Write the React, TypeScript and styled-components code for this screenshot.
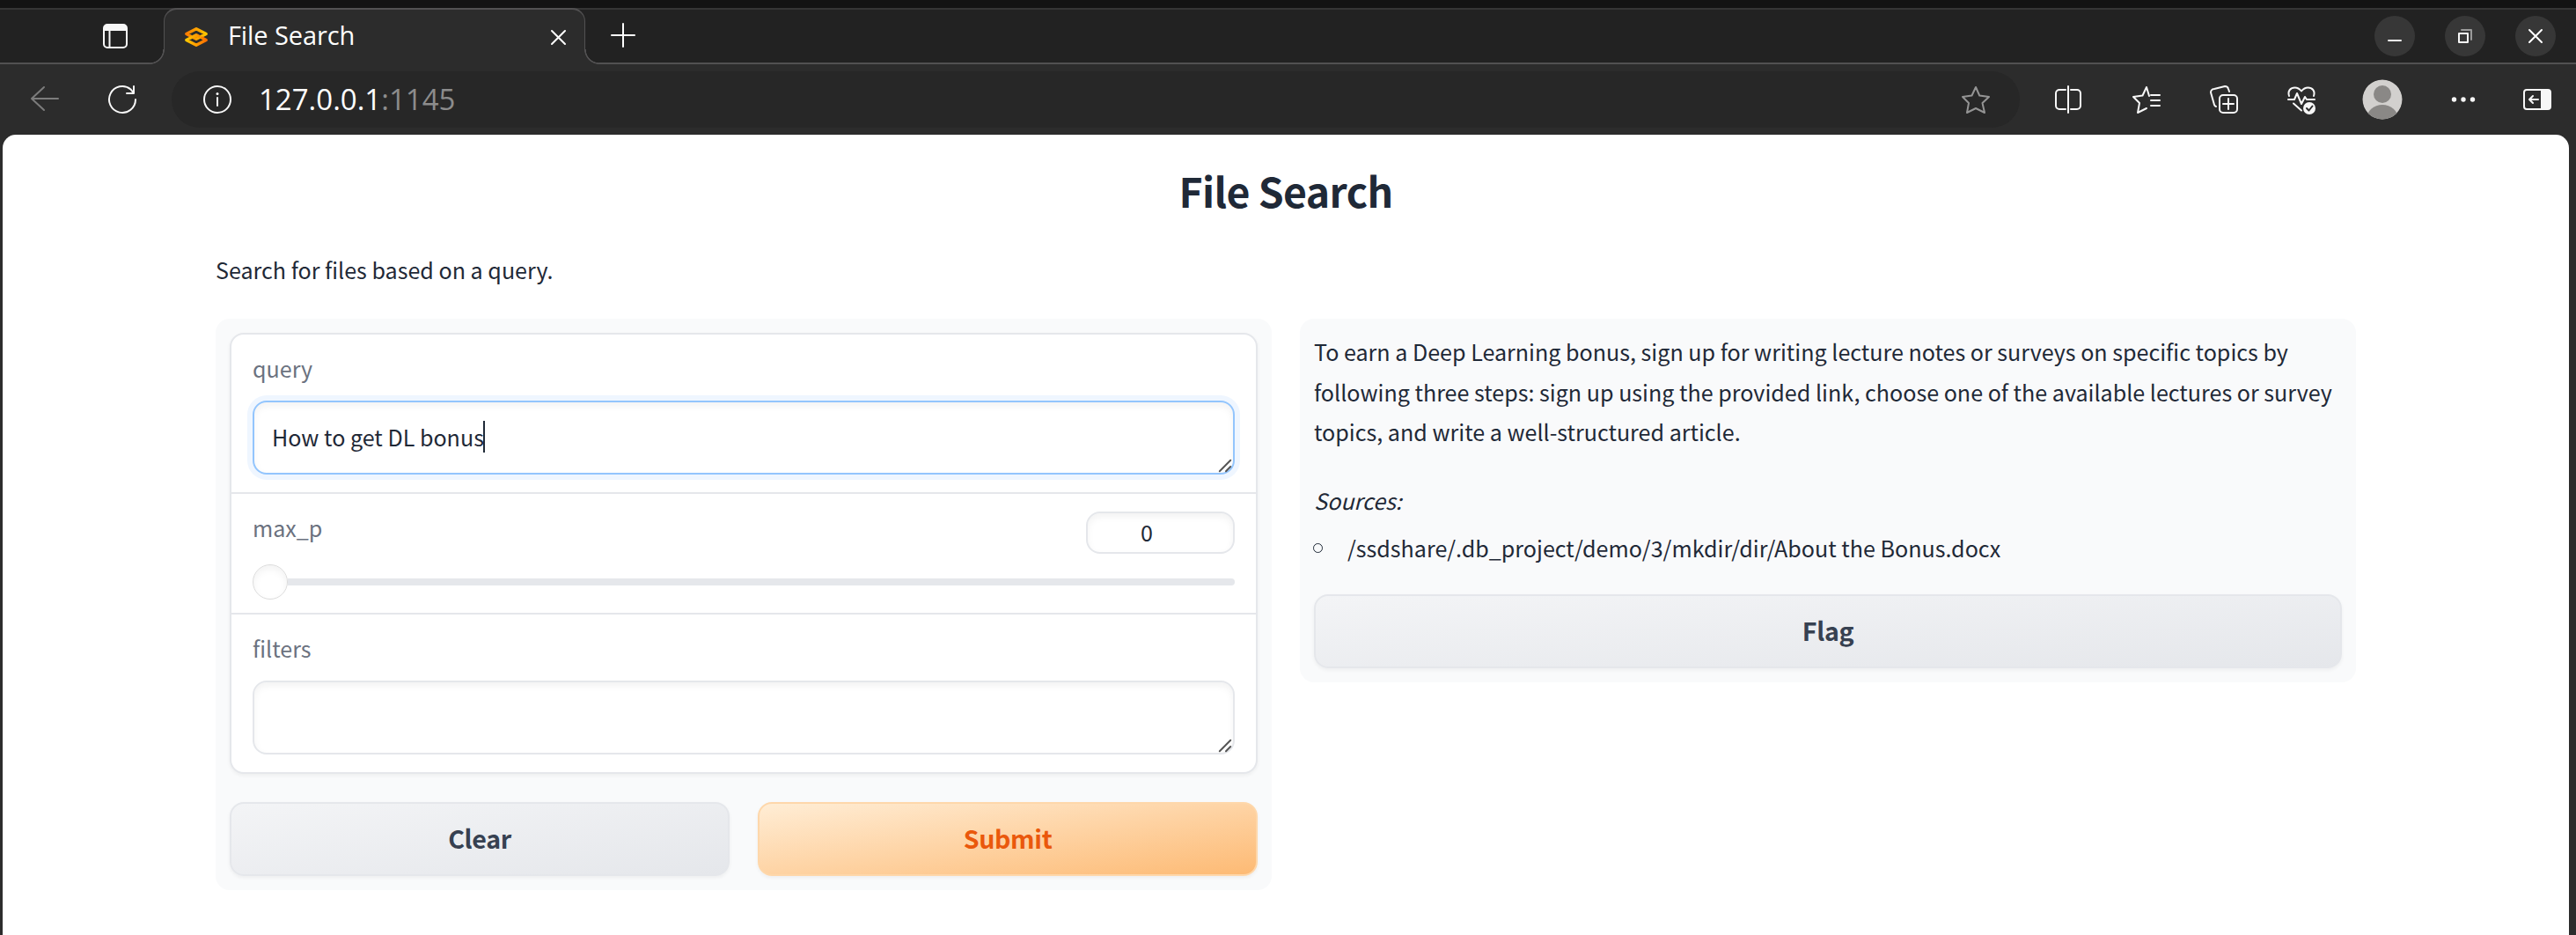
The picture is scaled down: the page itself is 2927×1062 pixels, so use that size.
import React from "react";
import styled, { createGlobalStyle, css } from "styled-components";

const uiFont = `"Noto Sans CJK SC", "Noto Sans", sans-serif`;
const chromeFont = `"Open Sans", "Noto Sans", sans-serif`;

const GlobalStyle = createGlobalStyle`
  *, *::before, *::after { box-sizing: border-box; }
  html, body { margin: 0; background: #2c2c2c; }
  h1, p, ul { margin: 0; padding: 0; }
`;

const Window = styled.div`
  width: 2927px;
  height: 1062px;
  overflow: hidden;
  display: flex;
  flex-direction: column;
  background: #2c2c2c;
  border-top: 9px solid #131313;
`;

/* ---------- Browser chrome ---------- */

const TabStrip = styled.div`
  flex: none;
  height: 64px;
  display: flex;
  align-items: stretch;
  background: #222;
  box-shadow: inset 0 2px #353535, inset 0 -2px #525152;
`;

const StripStart = styled.div`
  width: 186px;
  padding: 18px 0 0 117px;
`;

const Tab = styled.div`
  position: relative;
  width: 479px;
  display: flex;
  align-items: center;
  padding: 0 21px 0 23px;
  background: #2c2c2c;
  border: 1px solid #525152;
  border-top-width: 2px;
  border-bottom: 0;
  border-radius: 15px 15px 0 0;
  &::before,
  &::after {
    content: "";
    position: absolute;
    bottom: 0;
    width: 17px;
    height: 17px;
  }
  &::before {
    left: -17px;
    background: radial-gradient(circle at 0 0, #222 15px, #525152 15.6px, #525152 16.6px, #2c2c2c 17.2px);
  }
  &::after {
    right: -17px;
    background: radial-gradient(circle at 100% 0, #222 15px, #525152 15.6px, #525152 16.6px, #2c2c2c 17.2px);
  }
`;

const TabTitle = styled.span`
  flex: 1;
  margin: -5px 0 0 23px;
  color: #fff;
  font: 400 29px/40px ${chromeFont};
  letter-spacing: -0.1px;
`;

const NewTab = styled.div`
  padding: 17px 0 0 29px;
  flex: 1;
`;

const WindowControls = styled.div`
  display: flex;
  gap: 34px;
  padding: 9px 23px 0 0;
`;

const RoundButton = styled.div`
  width: 46px;
  height: 46px;
  border-radius: 50%;
  background: #373737;
  display: flex;
  align-items: center;
  justify-content: center;
`;

const Toolbar = styled.div`
  flex: none;
  height: 80px;
  display: flex;
  align-items: center;
  padding: 0 28px 0 35px;
`;

const NavButtons = styled.div`
  flex: none;
  display: flex;
  gap: 56px;
  width: 160px;
`;

const AddressBar = styled.div`
  flex: none;
  width: 2100px;
  height: 64px;
  display: flex;
  align-items: center;
  padding: 0 34px 0 36px;
  border-radius: 32px;
  background: #272727;
`;

const Url = styled.span`
  flex: 1;
  margin-left: 31px;
  color: #fff;
  font: 400 33px/44px ${chromeFont};
  letter-spacing: 0px;
`;

const Port = styled.span`
  color: #8c8c8c;
`;

const ToolbarActions = styled.div`
  flex: 1;
  display: flex;
  align-items: center;
  gap: 56px;
  padding-left: 40px;
`;

const ProfileGroup = styled.div`
  display: flex;
  align-items: center;
  gap: 54.5px;
  margin-left: -3px;
`;

const Icon = styled.svg`
  display: block;
  flex: none;
  overflow: visible;
  fill: none;
  stroke: ${(p) => p.color || "#f7f7f7"};
  stroke-width: 2;
  stroke-linecap: round;
  stroke-linejoin: round;
`;

/* ---------- Page ---------- */

const Page = styled.main`
  flex: 1;
  margin: 0 8px 0 3px;
  padding: 29px 242px 0;
  background: #fff;
  border-radius: 15px 15px 0 0;
  color: #1f2937;
  font: 400 25.08px/42px ${uiFont};
`;

const Title = styled.h1`
  text-align: center;
  font-size: 46.4px;
  line-height: 68px;
  font-weight: 600;
  letter-spacing: -0.6px;
`;

const Description = styled.p`
  margin-top: 35px;
  height: 77px;
`;

const Columns = styled.div`
  display: grid;
  grid-template-columns: 1200px 1200px;
  gap: 32px;
  align-items: start;
`;

const Panel = styled.section`
  padding: 16px;
  border-radius: 16px;
  background: #f9fafb;
`;

const Card = styled.div`
  border: 2px solid #e5e7eb;
  border-radius: 16px;
  background: #fff;
  box-shadow: 0 2px 4px rgba(0, 0, 0, 0.05);
`;

const Field = styled.div`
  padding: 17px 24px 20px;
  & + & {
    border-top: 2px solid #e5e7eb;
  }
`;

const SliderField = styled(Field)`
  padding-bottom: 15px;
`;

const Label = styled.div`
  color: #6b7280;
  height: 42px;
`;

const insetShadow = `inset 0 4px 8px rgba(0, 0, 0, 0.05)`;

const TextBox = styled.div<{ $focused?: boolean }>`
  position: relative;
  height: 84px;
  margin-top: 16px;
  padding: 0 20px 2px;
  display: flex;
  align-items: center;
  border: 2px solid #e5e7eb;
  border-radius: 16px;
  background: #fff;
  box-shadow: ${insetShadow};
  ${(p) =>
    p.$focused &&
    css`
      border-color: #93c5fd;
      box-shadow: 0 0 0 6px #eff6ff, ${insetShadow};
    `}
`;

const Caret = styled.span`
  width: 2px;
  height: 36px;
  margin-left: -1px;
  background: #1f2937;
`;

const Grip = styled(Icon)`
  position: absolute;
  right: 2px;
  bottom: 1px;
`;

const SliderHead = styled.div`
  display: flex;
  justify-content: space-between;
  height: 51px;
`;

const NumberBox = styled.div`
  width: 169px;
  height: 48px;
  margin-top: 3px;
  padding-right: 31px;
  border: 2px solid #e5e7eb;
  border-radius: 16px;
  box-shadow: ${insetShadow};
  text-align: center;
  line-height: 43px;
`;

const SliderTrack = styled.div`
  display: flex;
  align-items: center;
  margin-top: 12px;
  height: 40px;
`;

const Thumb = styled.div`
  width: 40px;
  height: 40px;
  border: 1px solid #dcdcdc;
  border-radius: 50%;
  background: #fff;
  box-shadow: ${insetShadow};
`;

const Rail = styled.div`
  flex: 1;
  height: 8px;
  border-radius: 0 4px 4px 0;
  background: #e5e7eb;
`;

const Actions = styled.div`
  display: flex;
  gap: 32px;
  margin-top: 32px;
`;

const Button = styled.button<{ $primary?: boolean }>`
  flex: 1;
  height: 84px;
  padding: 0 0 2px;
  border: 2px solid ${(p) => (p.$primary ? "#fed7aa" : "#e5e7eb")};
  border-radius: 16px;
  background: ${(p) =>
    p.$primary
      ? "linear-gradient(to bottom right, #ffedd5, #fdba74)"
      : "linear-gradient(to bottom right, #f3f4f6, #e5e7eb)"};
  box-shadow: 0 2px 4px rgba(0, 0, 0, 0.05);
  color: ${(p) => (p.$primary ? "#ea580c" : "#374151")};
  font: 600 28.6px/48px ${uiFont};
  letter-spacing: -0.35px;
`;

const Answer = styled.p`
  margin-top: -1px;
  line-height: 45.5px;
  white-space: nowrap;
`;

const Sources = styled.p`
  margin-top: 31px;
  font-style: italic;
  line-height: 46px;
`;

const SourceList = styled.ul`
  list-style: none;
  margin-top: 8px;
`;

const SourceItem = styled.li`
  display: flex;
  align-items: center;
  line-height: 46px;
`;

const Bullet = styled.span`
  width: 11px;
  height: 11px;
  margin: 2px 28px 0 -1px;
  border: 1px solid #1f2937;
  border-radius: 50%;
`;

const FlagRow = styled.div`
  display: flex;
  margin-top: 30.5px;
`;

function ResizeGrip() {
  return (
    <Grip width="14" height="14" viewBox="0 0 14 14" color="#555">
      <path d="M.8 13.2 13.2.8M8 13.2l5.2-5.2" />
    </Grip>
  );
}

function BrowserTabs() {
  return (
    <TabStrip>
      <StripStart>
        <Icon width="28" height="28" viewBox="0 0 28 28">
          <rect x="1" y="1" width="26" height="26" rx="4" />
          <path d="M1 8V5a4 4 0 0 1 4-4h18a4 4 0 0 1 4 4v3z" fill="#f7f7f7" stroke="none" />
          <path d="M7.5 8v19" strokeLinecap="butt" />
        </Icon>
      </StripStart>
      <Tab>
        <Icon width="26" height="22" viewBox="0 0 26 22">
          <defs>
            <linearGradient id="logoTop" x1="0" x2="1" y1="0" y2="0">
              <stop offset="0" stopColor="#ff7c00" />
              <stop offset="1" stopColor="#ffc800" />
            </linearGradient>
            <linearGradient id="logoBottom" x1="0" x2="1" y1="0" y2="0">
              <stop offset="0" stopColor="#ffc800" />
              <stop offset="1" stopColor="#ff7000" />
            </linearGradient>
          </defs>
          <g strokeWidth="3.4">
            <path
              d="M6.5 10 1.800 7.500 13 1.700 24.200 7.500 13 13.300 10 11.800"
              stroke="url(#logoTop)"
              strokeWidth="3.4"
            />
            <path
              d="M19.500 12 24.200 14.500 13 20.300 1.800 14.500 13 8.700 16 10.200"
              stroke="url(#logoBottom)"
              strokeWidth="3.4"
            />
          </g>
        </Icon>
        <TabTitle>File Search</TabTitle>
        <Icon width="17" height="17" viewBox="0 0 17 17" color="#fff">
          <path d="m1 1 15 15M16 1 1 16" />
        </Icon>
      </Tab>
      <NewTab>
        <Icon width="28" height="28" viewBox="0 0 28 28" color="#fff">
          <path d="M14 1v26M1 14h26" />
        </Icon>
      </NewTab>
      <WindowControls>
        <RoundButton>
          <Icon width="16" height="16" viewBox="0 0 16 16">
            <path d="M1 13h14" />
          </Icon>
        </RoundButton>
        <RoundButton>
          <Icon width="16" height="16" viewBox="0 0 16 16">
            <path d="M4 1h11v11" stroke="#9a9a9a" />
            <path d="M1 5h10v10H1z" />
          </Icon>
        </RoundButton>
        <RoundButton>
          <Icon width="16" height="16" viewBox="0 0 16 16" color="#fff">
            <path d="m1 1 14 14M15 1 1 15" />
          </Icon>
        </RoundButton>
      </WindowControls>
    </TabStrip>
  );
}

function BrowserToolbar() {
  return (
    <Toolbar>
      <NavButtons>
        <Icon width="32" height="32" viewBox="0 0 32 32" color="#7c7c7c">
          <path d="M31 15H1M15 2 1 15l14 13" />
        </Icon>
        <Icon width="32" height="32" viewBox="0 0 32 32">
          <path d="M31 16A15 15 0 1 1 25.500 4.400L29 9M29 1v8h-8" />
        </Icon>
      </NavButtons>
      <AddressBar>
        <Icon width="32" height="32" viewBox="0 0 32 32">
          <circle cx="16" cy="16" r="15" />
          <path d="M16 14v9" />
          <circle cx="16" cy="9.500" r="1.500" fill="#f7f7f7" stroke="none" />
        </Icon>
        <Url>
          127.0.0.1<Port>:1145</Port>
        </Url>
        <Icon width="32" height="32" viewBox="0 0 32 32" color="#949494">
          <path d="m16 2 4.200 9.500L31 13l-7.500 7 2.500 11-10-5-10 5L8 20 1 13l10.500-1.500z" />
        </Icon>
      </AddressBar>
      <ToolbarActions>
        <Icon width="32" height="32" viewBox="0 0 32 32">
          <path d="M12 5H5a4 4 0 0 0-4 4v14a4 4 0 0 0 4 4h7M18 5h7a4 4 0 0 1 4 4v14a4 4 0 0 1-4 4h-7M15 1v30" />
        </Icon>
        <Icon width="32" height="32" viewBox="0 0 32 32">
          <path d="M19 12 16 2l-4.500 9.500L1 13l7 7-2 11 10-5" />
          <path d="M21 11h10M21 17h10M21 23h10" />
        </Icon>
        <Icon width="32" height="32" viewBox="0 0 32 32">
          <rect x="11" y="11" width="20" height="20" rx="4" />
          <path d="M21 15v12M15 21h12M22 7l-1-3a4 4 0 0 0-4-3L5 4a4 4 0 0 0-4 4l4 14a3 3 0 0 0 2 2" />
        </Icon>
        <Icon width="32" height="32" viewBox="0 0 32 32">
          <path d="M2 12C0 6 4 2.500 8.500 2.500c3.500 0 5.500 1.500 7.500 4 2-2.500 4-4 7.500-4 4.500 0 8.500 3.500 6.500 9.500M1 16h7l3-7 5 12 4-8 2 3h9M7 20.500l9 8" />
          <circle cx="25" cy="26" r="7" fill="#f7f7f7" stroke="none" />
          <path d="m22 26 2.500 2.500 4-5" stroke="#2c2c2c" />
        </Icon>
        <ProfileGroup>
          <Icon width="46" height="46" viewBox="0 0 46 46">
            <defs>
              <clipPath id="avatarClip">
                <circle cx="23" cy="23" r="22.500" />
              </clipPath>
            </defs>
            <g clipPath="url(#avatarClip)" stroke="none">
              <circle cx="23" cy="23" r="23" fill="#d2d0ce" />
              <circle cx="23" cy="17" r="10" fill="#8a8886" />
              <ellipse cx="23" cy="45" rx="18" ry="16" fill="#8a8886" />
            </g>
          </Icon>
          <Icon width="28" height="32" viewBox="0 0 28 32">
            <g fill="#f7f7f7" stroke="none">
              <circle cx="3.500" cy="16" r="2.700" />
              <circle cx="14" cy="16" r="2.700" />
              <circle cx="24.500" cy="16" r="2.700" />
            </g>
          </Icon>
          <Icon width="32" height="24" viewBox="0 0 32 24">
            <rect x="1" y="1" width="30" height="22" rx="3" />
            <path d="M20 1h9a2 2 0 0 1 2 2v18a2 2 0 0 1-2 2h-9z" fill="#f7f7f7" stroke="none" />
            <path d="M17 12H7.500M11 8l-4 4 4 4" />
          </Icon>
        </ProfileGroup>
      </ToolbarActions>
    </Toolbar>
  );
}

export default function App() {
  return (
    <>
      <GlobalStyle />
      <Window>
        <BrowserTabs />
        <BrowserToolbar />
        <Page>
          <Title>File Search</Title>
          <Description>Search for files based on a query.</Description>
          <Columns>
            <Panel>
              <Card>
                <Field>
                  <Label>query</Label>
                  <TextBox $focused>
                    <span>How to get DL bonus</span>
                    <Caret />
                    <ResizeGrip />
                  </TextBox>
                </Field>
                <SliderField>
                  <SliderHead>
                    <Label>max_p</Label>
                    <NumberBox>0</NumberBox>
                  </SliderHead>
                  <SliderTrack>
                    <Thumb />
                    <Rail />
                  </SliderTrack>
                </SliderField>
                <Field>
                  <Label>filters</Label>
                  <TextBox>
                    <ResizeGrip />
                  </TextBox>
                </Field>
              </Card>
              <Actions>
                <Button>Clear</Button>
                <Button $primary>Submit</Button>
              </Actions>
            </Panel>
            <Panel>
              <Answer>
                To earn a Deep Learning bonus, sign up for writing lecture notes or surveys on specific topics by
                <br />
                following three steps: sign up using the provided link, choose one of the available lectures or survey
                <br />
                topics, and write a well-structured article.
              </Answer>
              <Sources>Sources:</Sources>
              <SourceList>
                <SourceItem>
                  <Bullet />
                  /ssdshare/.db_project/demo/3/mkdir/dir/About the Bonus.docx
                </SourceItem>
              </SourceList>
              <FlagRow>
                <Button>Flag</Button>
              </FlagRow>
            </Panel>
          </Columns>
        </Page>
      </Window>
    </>
  );
}
